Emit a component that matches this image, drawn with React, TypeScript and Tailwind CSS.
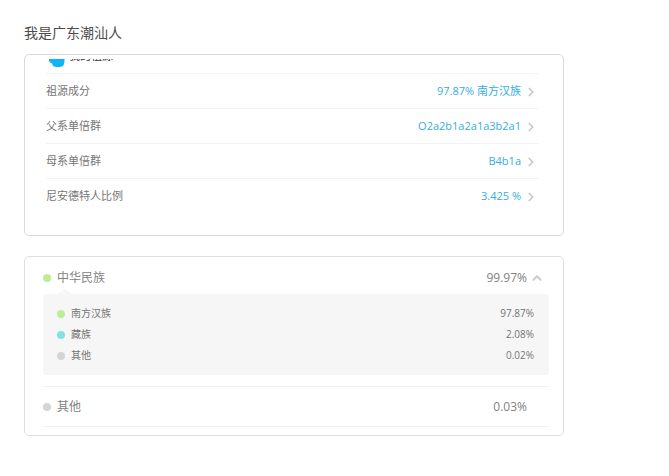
import { ChevronRight, ChevronUp } from "lucide-react";

const reportRows = [
  { label: "祖源成分", value: "97.87% 南方汉族" },
  { label: "父系单倍群", value: "O2a2b1a2a1a3b2a1" },
  { label: "母系单倍群", value: "B4b1a" },
  { label: "尼安德特人比例", value: "3.425 %" },
];

const groups = [
  { name: "南方汉族", share: "97.87%", dot: "bg-[#bfec99]" },
  { name: "藏族", share: "2.08%", dot: "bg-[#83e3e2]" },
  { name: "其他", share: "0.02%", dot: "bg-[#d5d5d5]" },
];

function Dot({ color }: { color: string }) {
  return <span className={`size-2 shrink-0 rounded-full ${color}`} />;
}

function ReportCard() {
  return (
    <section className="h-[182px] rounded-[5px] border border-[#d9d9d9] pt-1 pr-6 pl-[21px]">
      <div className="overflow-hidden">
        <header className="-mt-2 flex h-[23px] items-center gap-1 border-b border-[#f3f3f3] pl-[2px] text-[11px] text-[#333]">
          <svg className="-mt-[7px] h-4 w-[17px]" viewBox="0 0 17 16" aria-hidden="true">
            <path d="M1 2h15.500v8l-.5 3-1 2-3 1H8l-3-1-1-2.500-2-1L1 10z" fill="#12b2f8" />
          </svg>
          <h2 className="-mt-3">我的祖源</h2>
        </header>
        <ul>
          {reportRows.map((row) => (
            <li key={row.label} className="border-b border-[#f3f3f3] last:border-b-0">
              <a href="#" className="flex h-[34px] items-center pt-px text-[11px] text-[#757575]">
                <span>{row.label}</span>
                <span className="ml-auto text-[#35ade5]">{row.value}</span>
                <ChevronRight className="mr-px ml-[3px] size-3.5 text-[#c8c8c8]" strokeWidth={3} />
              </a>
            </li>
          ))}
        </ul>
      </div>
    </section>
  );
}

function CompositionCard() {
  return (
    <section className="mt-5 rounded-[5px] border border-[#dedede] pt-[10px] pr-[14px] pb-2 pl-[18px] text-[#828282]">
      <button type="button" aria-expanded="true" className="flex h-[22px] w-full items-center text-[12px]">
        <Dot color="bg-[#bfec99]" />
        <span className="ml-[6px]">中华民族</span>
        <span className="ml-auto">99.97%</span>
        <ChevronUp className="mr-[5px] ml-[3px] size-3.5 text-[#d0d0d0]" strokeWidth={4} />
      </button>
      <svg className="ml-[14px] block h-[5px] w-4" viewBox="0 0 16 5" aria-hidden="true">
        <path d="M1 5 8 0l7 5z" fill="#f6f6f6" />
      </svg>
      <ul className="rounded-[3px] bg-[#f6f6f6] pt-[9px] pr-[15px] pb-[9px] pl-[14px] text-[10px] text-[#757575]">
        {groups.map((group) => (
          <li key={group.name} className="flex h-[21px] items-center">
            <Dot color={group.dot} />
            <span className="ml-[6px]">{group.name}</span>
            <span className="ml-auto">{group.share}</span>
          </li>
        ))}
      </ul>
      <div className="mt-[11px] flex h-[41px] items-center border-y border-[#f1f1f1] pr-[22px] text-[12px]">
        <Dot color="bg-[#d5d5d5]" />
        <span className="ml-[6px]">其他</span>
        <span className="ml-auto">0.03%</span>
      </div>
    </section>
  );
}

export default function App() {
  return (
    <main className="min-h-screen bg-white px-6 pt-[21px] font-['Open_Sans','Noto_Sans_CJK_SC',sans-serif]">
      <div className="max-w-[540px]">
        <h1 className="mb-[9px] text-[14px] leading-6 text-[#4c4c4c]">我是广东潮汕人</h1>
        <ReportCard />
        <CompositionCard />
      </div>
    </main>
  );
}
